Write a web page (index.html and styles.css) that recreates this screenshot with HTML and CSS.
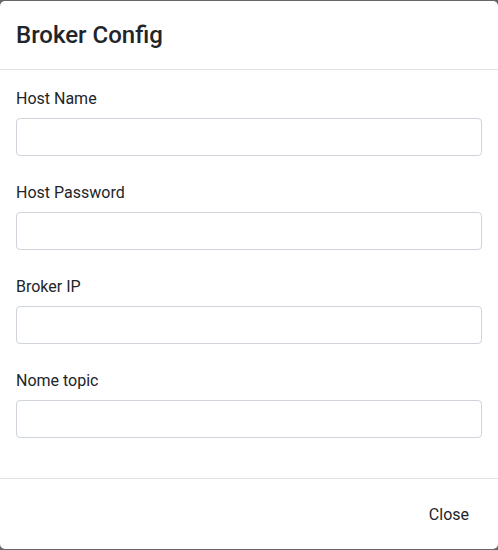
FILE: index.html
```html
<!DOCTYPE html>
<html lang="en">
<head>
<meta charset="utf-8">
<title>Broker Config</title>
<link rel="stylesheet" href="styles.css">
</head>
<body>
<div class="modal">
  <div class="modal-header">
    <h4 class="modal-title">Broker Config</h4>
  </div>
  <div class="modal-body">
    <div class="form-group">
      <label class="form-label" for="hostName">Host Name</label>
      <input class="form-control" id="hostName" type="text">
    </div>
    <div class="form-group">
      <label class="form-label" for="hostPassword">Host Password</label>
      <input class="form-control" id="hostPassword" type="text">
    </div>
    <div class="form-group">
      <label class="form-label" for="brokerIp">Broker IP</label>
      <input class="form-control" id="brokerIp" type="text">
    </div>
    <div class="form-group">
      <label class="form-label" for="topic">Nome topic</label>
      <input class="form-control" id="topic" type="text">
    </div>
  </div>
  <div class="modal-footer">
    <button class="btn" type="button">Close</button>
  </div>
</div>
</body>
</html>
```
FILE: styles.css
```css
* { box-sizing: border-box; }
html, body { margin: 0; padding: 0; }
body {
  background: #666666;
  font-family: Roboto, "Liberation Sans", sans-serif;
  color: #212529;
  padding: 1px 0;
  height: 550px;
}
.modal {
  background: #ffffff;
  width: 498px;
  height: 548px;
  border-radius: 5px;
  display: flex;
  flex-direction: column;
}
.modal-header {
  padding: 16px;
  border-bottom: 1px solid #dee2e6;
}
.modal-title {
  margin: 0;
  font-size: 24px;
  font-weight: 500;
  line-height: 36px;
}
.modal-body {
  padding: 16px;
  flex: 1;
}
.form-group { margin-bottom: 24px; }
.form-label {
  display: block;
  font-size: 16px;
  line-height: 24px;
  padding-top: 1px;
  height: 25px;
  margin-bottom: 7px;
}
.form-control {
  display: block;
  width: 100%;
  height: 38px;
  border: 1px solid #ced4da;
  border-radius: 4px;
  padding: 6px 12px;
  font-family: inherit;
  font-size: 16px;
  background: #fff;
}
.modal-footer {
  border-top: 1px solid #dee2e6;
  padding: 17px 16px 15px;
  display: flex;
  justify-content: flex-end;
  align-items: center;
  height: 71px;
}
.btn {
  background: transparent;
  border: 1px solid transparent;
  font-family: inherit;
  font-size: 16px;
  line-height: 24px;
  padding: 6px 12px;
  color: #212529;
  border-radius: 4px;
}
```
